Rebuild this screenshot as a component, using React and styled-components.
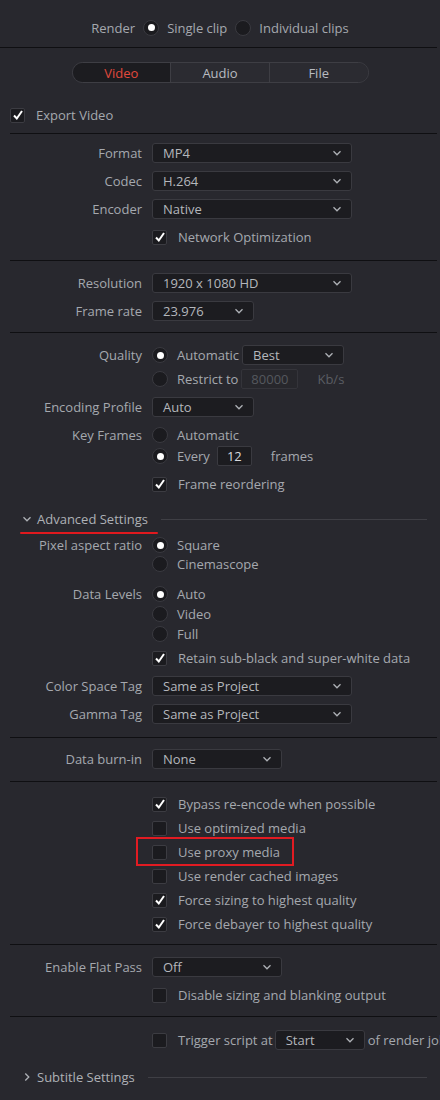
import React from "react";
import styled, { createGlobalStyle } from "styled-components";

const G = createGlobalStyle`
  body{margin:0;background:#28282e;font-family:"Open Sans",sans-serif;font-size:13px;color:#a5a8ae;}
  *{box-sizing:border-box;}
`;
const Page = styled.div`width:440px;height:1100px;overflow:hidden;background:#28282e;display:flex;flex-direction:column;`;
const Center = styled.div`height:${p=>p.h}px;padding-top:${p=>p.pt||0}px;display:flex;align-items:center;justify-content:center;gap:8px;`;
const Divider = styled.div`height:1px;flex:none;background:#0f0f12;margin:${p=>p.m||"0 3px 0 10px"};`;
const Tabs = styled.div`display:flex;width:297px;height:21px;border:1px solid #3e3e44;border-radius:11px;overflow:hidden;`;
const Tab = styled.div`flex:1;display:flex;align-items:center;justify-content:center;color:${p=>p.on?"#e0493c":"#b8bbc0"};background:${p=>p.on?"#1c1c20":"#2b2b31"};border-left:${p=>p.first?"none":"1px solid #3e3e44"};`;
const Row = styled.div`height:${p=>p.h||28}px;flex:none;display:grid;grid-template-columns:152px 1fr;align-items:center;white-space:nowrap;`;
const Label = styled.div`text-align:right;padding-right:10px;`;
const Ctl = styled.div`display:flex;align-items:center;gap:${p=>p.g??0}px;`;
const Free = styled.div`height:${p=>p.h}px;display:flex;align-items:center;padding-left:${p=>p.pl}px;gap:11px;white-space:nowrap;`;
const Box = styled.div`width:15px;height:15px;border:1px solid #3c3c42;background:#1b1b1f;border-radius:2px;display:flex;align-items:center;justify-content:center;flex:none;`;
const Radio = styled.div`width:16px;height:16px;border-radius:50%;background:#1b1b1f;border:1px solid #3a3a40;display:flex;align-items:center;justify-content:center;flex:none;&::after{content:"";width:7px;height:7px;border-radius:50%;background:${p=>p.on?"#fff":"transparent"};}`;
const Sel = styled.div`width:${p=>p.w}px;height:20px;background:#1c1c20;border:1px solid #3a3a40;border-radius:3px;display:flex;align-items:center;justify-content:space-between;padding:0 9px 0 10px;color:#b4b7bc;margin-left:${p=>p.ml||0}px;flex:none;`;
const Inp = styled.div`width:${p=>p.w}px;height:20px;border:1px solid ${p=>p.dim?"#34343a":"#3a3a40"};background:${p=>p.dim?"#27272c":"#1c1c20"};border-radius:2px;display:flex;align-items:center;justify-content:center;color:${p=>p.dim?"#55585e":"#d8dadd"};margin:0 ${p=>p.mr}px 0 ${p=>p.ml}px;`;
const Dim = styled.span`color:#5a5d63;`;
const Sect = styled.div`height:${p=>p.h}px;flex:none;display:flex;align-items:center;padding-left:22px;gap:5px;`;
const SectLine = styled.div`flex:1;height:1px;background:#3f3f45;margin:0 13px 0 8px;`;
const SectTitle = styled.span`position:relative;color:#aeb1b6;`;
const RedLine = styled.div`position:absolute;left:-17px;right:-10px;bottom:-6px;height:2px;background:#e0191e;border-radius:1px;`;
const Hl = styled.div`position:relative;`;
const RedBox = styled.div`position:absolute;left:136px;top:-3px;width:158px;height:29px;border:2px solid #e11b22;`;
const Sp = styled.div`height:${p=>p.h}px;flex:none;`;

const Chev = ({d="down"}) => <svg width="10" height="10" viewBox="0 0 10 10" fill="none" stroke="#aeb1b6" strokeWidth="1.3">{d==="down"?<path d="M1.5 3.3 5 6.8 8.5 3.3"/>:<path d="M3.3 1.5 6.8 5 3.3 8.5"/>}</svg>;
const Check = ({on}) => <Box>{on && <svg width="12" height="12" viewBox="0 0 12 12"><path d="M2 6.5 4.8 9.5 10 2" fill="none" stroke="#fff" strokeWidth="2"/></svg>}</Box>;
const S = ({w,v,ml}) => <Sel w={w} ml={ml}><span>{v}</span><Chev/></Sel>;
const CB = ({on,t,h=24}) => <Row h={h}><span/><Ctl g={11}><Check on={on}/><span>{t}</span></Ctl></Row>;
const R = ({on,t,label="",h=20,children}) => <Row h={h}><Label>{label}</Label><Ctl g={9}><Radio on={on}/><span>{t}</span>{children}</Ctl></Row>;

export default function App(){
  return <Page><G/>
    <Center h={47} pt={8}><span>Render</span><Radio on/><span>Single clip</span><Radio/><span>Individual clips</span></Center>
    <Divider m="0 3px 0 0"/>
    <Center h={49}><Tabs><Tab on first>Video</Tab><Tab>Audio</Tab><Tab>File</Tab></Tabs></Center>
    <Free h={36} pl={10}><Check on/><span>Export Video</span></Free>
    <Divider/>
    <Sp h={5}/>
    <Row><Label>Format</Label><S w={200} v="MP4"/></Row>
    <Row><Label>Codec</Label><S w={200} v="H.264"/></Row>
    <Row><Label>Encoder</Label><S w={200} v="Native"/></Row>
    <CB on t="Network Optimization" h={28}/>
    <Sp h={9}/>
    <Divider/>
    <Sp h={8}/>
    <Row><Label>Resolution</Label><S w={200} v="1920 x 1080 HD"/></Row>
    <Row><Label>Frame rate</Label><S w={102} v="23.976"/></Row>
    <Sp h={7}/>
    <Divider/>
    <Sp h={9}/>
    <R on t="Automatic" label="Quality" h={26}><S w={102} v="Best" ml={-6}/></R>
    <R t="Restrict to" h={22}><Inp w={57} dim ml={-6} mr={10}>80000</Inp><Dim>Kb/s</Dim></R>
    <Row h={34}><Label>Encoding Profile</Label><S w={102} v="Auto"/></Row>
    <R t="Automatic" label="Key Frames" h={22}/>
    <R on t="Every" h={20}><Inp w={35} ml={-2} mr={10}>12</Inp><span>frames</span></R>
    <CB on t="Frame reordering" h={36}/>
    <Sect h={34}><Chev/><SectTitle>Advanced Settings<RedLine/></SectTitle><SectLine/></Sect>
    <R on t="Square" label="Pixel aspect ratio" h={14}/>
    <R t="Cinemascope" h={28}/>
    <Sp h={6}/>
    <R on t="Auto" label="Data Levels" h={20}/>
    <R t="Video" h={20}/>
    <R t="Full" h={20}/>
    <CB on t="Retain sub-black and super-white data" h={28}/>
    <Row><Label>Color Space Tag</Label><S w={200} v="Same as Project"/></Row>
    <Row><Label>Gamma Tag</Label><S w={200} v="Same as Project"/></Row>
    <Sp h={9}/>
    <Divider/>
    <Sp h={7}/>
    <Row><Label>Data burn-in</Label><S w={130} v="None"/></Row>
    <Sp h={8}/>
    <Divider/>
    <Sp h={10}/>
    <CB on t="Bypass re-encode when possible"/>
    <CB t="Use optimized media"/>
    <Hl><CB t="Use proxy media"/><RedBox/></Hl>
    <CB t="Use render cached images"/>
    <CB on t="Force sizing to highest quality"/>
    <CB on t="Force debayer to highest quality"/>
    <Sp h={8}/>
    <Divider/>
    <Sp h={8}/>
    <Row><Label>Enable Flat Pass</Label><S w={130} v="Off"/></Row>
    <CB t="Disable sizing and blanking output" h={28}/>
    <Sp h={7}/>
    <Divider/>
    <Sp h={9}/>
    <Row><span/><Ctl g={11}><Check/><span>Trigger script at</span><S w={90} v="Start" ml={-9}/><span style={{marginLeft:-8}}>of render job</span></Ctl></Row>
    <Sect h={46}><Chev d="right"/><SectTitle>Subtitle Settings</SectTitle><SectLine/></Sect>
  </Page>;
}
